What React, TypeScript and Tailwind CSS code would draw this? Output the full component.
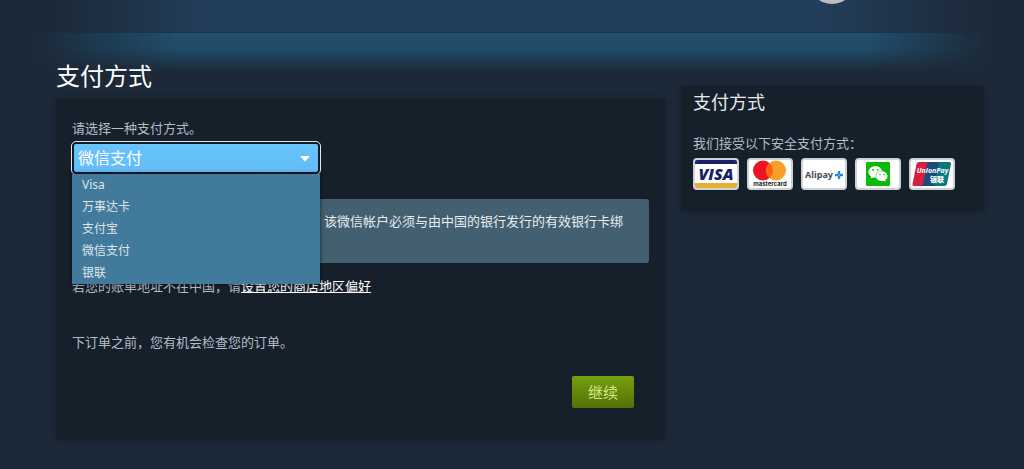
import { useState } from "react";
import type { ReactNode } from "react";
import { FaWeixin } from "react-icons/fa";

const METHODS = [
  { id: "visa", label: "Visa" },
  { id: "mastercard", label: "万事达卡" },
  { id: "alipay", label: "支付宝" },
  { id: "wechat", label: "微信支付" },
  { id: "unionpay", label: "银联" },
];

function CardFrame({ name, children }: { name: string; children: ReactNode }) {
  return (
    <li
      aria-label={name}
      className="flex h-8 w-[46px] items-center justify-center overflow-hidden rounded-[4px] border-2 border-[#ced1d8] bg-white"
    >
      {children}
    </li>
  );
}

function VisaLogo() {
  return (
    <svg viewBox="0 0 42 28" className="h-7 w-[42px]">
      <rect width="42" height="4" fill="#1a1f6b" />
      <rect y="23" width="42" height="5" fill="#e6b035" />
      <text x="21" y="19.5" textAnchor="middle" fontFamily="Open Sans, sans-serif" fontSize="16" fontWeight="800" fontStyle="italic" fill="#1a1f6b">
        VISA
      </text>
    </svg>
  );
}

function MastercardLogo() {
  return (
    <svg viewBox="0 0 42 28" className="h-7 w-[42px]">
      <circle cx="14" cy="10.5" r="10" fill="#eb1324" />
      <circle cx="27" cy="10.5" r="10" fill="#f79e2b" />
      <path d="M20.500 2.900a10 10 0 0 1 0 15.200a10 10 0 0 1 0-15.200z" fill="#ff6412" />
      <text x="21" y="26" textAnchor="middle" fontFamily="Inter, sans-serif" fontSize="6" fontWeight="700" fill="#231f20">
        mastercard
      </text>
    </svg>
  );
}

function AlipayLogo() {
  return (
    <svg viewBox="0 0 42 28" className="h-7 w-[42px]">
      <text x="2" y="18" fontFamily="Open Sans, sans-serif" fontSize="9" fontWeight="700" fill="#454a54">
        Alipay
      </text>
      <path d="M36 11v3M36 16v3M32 15h3M37 15h3" stroke="#2a86d8" strokeWidth="2.4" />
      <path d="M36 12v6M33 15h6" stroke="#2a86d8" strokeWidth="1" />
    </svg>
  );
}

function UnionPayLogo() {
  return (
    <svg viewBox="0 0 42 28" className="h-7 w-[42px]">
      <path d="M8 2h13l-5 24H3q-2 0-1.500-2L5.500 4q.5-2 2.500-2z" fill="#d4213d" />
      <path d="M16.500 2H31l-5 24H11.500z" fill="#1c4a7c" />
      <path d="M28 2h10.500q2 0 1.500 2l-4 20q-.5 2-2.500 2H23z" fill="#08797f" />
      <text x="21.5" y="13" textAnchor="middle" fontFamily="Open Sans, sans-serif" fontSize="7" fontWeight="700" fontStyle="italic" fill="#fff">
        UnionPay
      </text>
      <text x="26" y="21.5" textAnchor="middle" fontFamily="Noto Sans CJK SC, sans-serif" fontSize="7" fontWeight="900" fill="#fff">
        银联
      </text>
    </svg>
  );
}

function MethodSelect() {
  const [method, setMethod] = useState("wechat");
  const [open, setOpen] = useState(true);

  const pick = (id: string) => {
    setMethod(id);
    setOpen(false);
  };

  return (
    <div className="relative w-[248px]">
      <select
        id="payment-method"
        value={method}
        onChange={(e) => pick(e.target.value)}
        onMouseDown={(e) => {
          e.preventDefault();
          setOpen(!open);
        }}
        className="block h-8 w-full appearance-none rounded-[4px] border-2 border-[#101a2b] bg-linear-to-b from-[#68c4fb] to-[#62bbf5] pl-1 text-base leading-7 text-white outline-1 outline-[#e4e8ee]"
      >
        {METHODS.map((m) => (
          <option key={m.id} value={m.id}>{m.label}</option>
        ))}
      </select>
      <svg viewBox="0 0 10 6" className="pointer-events-none absolute top-[14px] right-[10px] h-[6px] w-[10px]">
        <path d="M0 0h10L5 5.500z" fill="#fff" />
      </svg>

      {/* Open list */}
      {open && (
        <ul className="absolute top-full left-0 z-10 w-full bg-[#417a9b] shadow-[0_0_4px_#000a]">
          {METHODS.map((m) => (
            <li key={m.id}>
              <button
                type="button"
                onClick={() => pick(m.id)}
                className="block w-full pl-[10px] text-left text-xs leading-[22px] text-[#dfe6ea] hover:text-white"
              >
                {m.label}
              </button>
            </li>
          ))}
        </ul>
      )}
    </div>
  );
}

export default function App() {
  return (
    <div className="min-h-screen bg-[#1c2938] font-['Noto_Sans','Noto_Sans_CJK_SC',sans-serif] text-[13px] leading-5 text-[#b4bcc8]">
      {/* Cart header */}
      <header className="relative h-8 overflow-hidden">
        <div className="h-full bg-[#233e5a] mask-[linear-gradient(to_right,transparent_5%,#000_20%,#000_80%,transparent_97%)]" />
        <span className="absolute -top-[42px] left-[79%] size-[46px] rounded-full bg-[#bcbfbd]" />
      </header>

      <div className="relative">
        <div className="absolute inset-x-0 top-0 h-10 border-t border-[#1b3650] bg-linear-to-b from-[#214f6c] via-[#1f4b69] via-40% to-[#1c2938] mask-[linear-gradient(to_right,transparent_3%,#000_17%,#000_85%,transparent_97%)]" />

        <main className="relative grid grid-cols-[minmax(0,1fr)_303px] gap-4 pr-10 pb-7 pl-14">
          <section>
            <h1 className="pt-7 pb-[7px] text-2xl leading-8 text-white">支付方式</h1>

            <div className="bg-[#16202b] px-4 pt-[19px] pb-8 shadow-[0_0_5px_#16202b]">
              <label htmlFor="payment-method" className="mb-1 block">请选择一种支付方式。</label>
              <MethodSelect />

              <p className="mt-[25px] h-16 rounded-[3px] bg-[#435f70] pt-3 pr-[26px] text-right text-[#e8edf0]">
                该微信帐户必须与由中国的银行发行的有效银行卡绑
              </p>

              <p className="mt-[13px]">
                若您的账单地址不在中国，请
                <a href="#region" className="text-white underline">设置您的商店地区偏好</a>
              </p>
              <p className="mt-9">下订单之前，您有机会检查您的订单。</p>

              <div className="mt-6 flex justify-end pr-[15px]">
                <button
                  type="button"
                  className="h-8 rounded-[2px] bg-linear-to-b from-[#76a10d] to-[#527006] px-4 text-[15px] text-[#cfe889]"
                >
                  继续
                </button>
              </div>
            </div>
          </section>

          <aside className="pt-[54px]">
            <div className="bg-[#16202b] px-3 pt-1 pb-[22px] shadow-[0_0_5px_#16202b]">
              <h2 className="mb-[19px] text-[18px] leading-6 text-[#e6ebf0]">支付方式</h2>
              <p>我们接受以下安全支付方式：</p>
              <ul className="mt-[5px] flex gap-2">
                <CardFrame name="Visa"><VisaLogo /></CardFrame>
                <CardFrame name="Mastercard"><MastercardLogo /></CardFrame>
                <CardFrame name="Alipay+"><AlipayLogo /></CardFrame>
                <CardFrame name="WeChat">
                  <span className="flex size-6 items-center justify-center rounded-[1px] bg-[#09bb07]">
                    <FaWeixin size={20} color="#fff" />
                  </span>
                </CardFrame>
                <CardFrame name="UnionPay"><UnionPayLogo /></CardFrame>
              </ul>
            </div>
          </aside>
        </main>
      </div>
    </div>
  );
}
